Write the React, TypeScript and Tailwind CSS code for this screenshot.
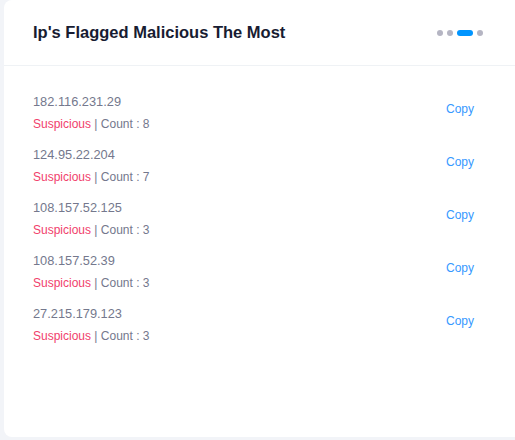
const rows = [
  { ip: "182.116.231.29", count: 8 },
  { ip: "124.95.22.204", count: 7 },
  { ip: "108.157.52.125", count: 3 },
  { ip: "108.157.52.39", count: 3 },
  { ip: "27.215.179.123", count: 3 },
];

export default function App() {
  return (
    <div
      className="w-[515px] h-[440px] bg-[#f2f4f8] pl-[4px] pb-[3px]"
      style={{ fontFamily: "'Liberation Sans', Arial, sans-serif" }}
    >
      <div className="h-full bg-white rounded-l-[8px] flex flex-col">
        {/* header */}
        <div className="h-[66px] flex items-center justify-between pl-[29px] pr-[32px] border-b border-[#eff2f5]">
          <h2 className="text-[16.5px] font-bold text-[#181c32]">Ip's Flagged Malicious The Most</h2>
          <div className="flex items-center gap-[4px]">
            <span className="w-[6px] h-[6px] rounded-full bg-[#b5b5c3]" />
            <span className="w-[6px] h-[6px] rounded-full bg-[#b5b5c3]" />
            <span className="w-[16px] h-[6px] rounded-full bg-[#0095ff]" />
            <span className="w-[6px] h-[6px] rounded-full bg-[#b5b5c3]" />
          </div>
        </div>

        {/* list */}
        <div className="pt-[25px] pl-[29px] pr-[41px] flex flex-col">
          {rows.map((r) => (
            <div key={r.ip} className="h-[53px] flex items-start justify-between">
              <div className="flex flex-col">
                <span className="text-[12.8px] leading-[22px] text-[#74788d]">{r.ip}</span>
                <span className="text-[12px] leading-[22px] text-[#74788d]">
                  <span className="text-[#f1416c]">Suspicious</span> | Count : {r.count}
                </span>
              </div>
              <button className="text-[12px] leading-[22px] mt-[7px] text-[#3699ff]">Copy</button>
            </div>
          ))}
        </div>
      </div>
    </div>
  );
}
